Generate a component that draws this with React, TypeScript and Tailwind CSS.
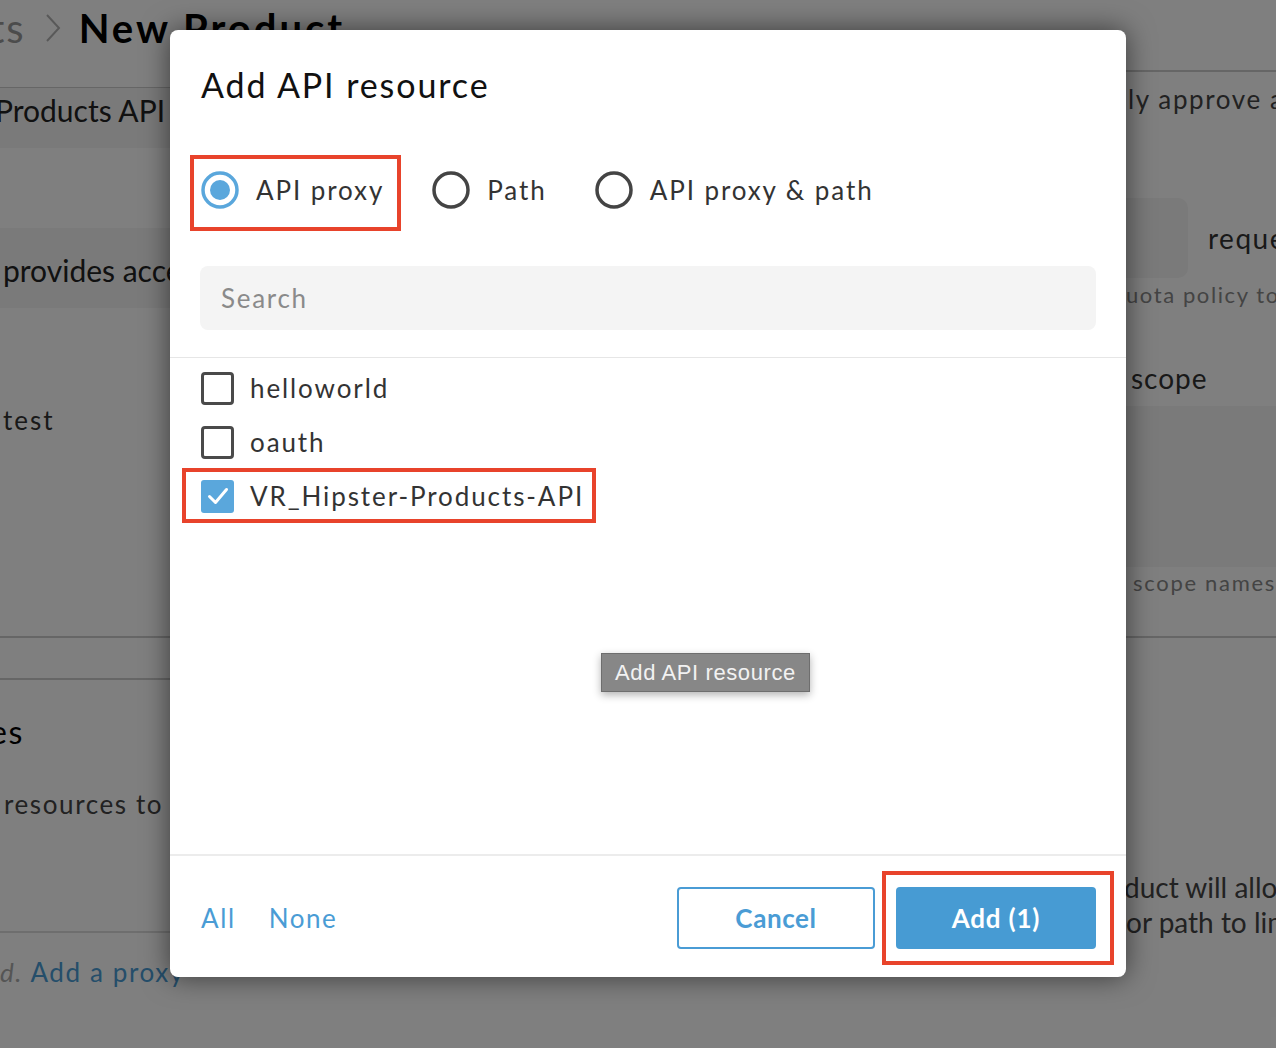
import React from "react";

function Radio({ checked }: { checked?: boolean }) {
  return (
    <svg width="38" height="38" viewBox="0 0 38 38" className="shrink-0">
      <circle cx="19" cy="19" r="17" fill="none" stroke={checked ? "#5aa7dc" : "#444444"} strokeWidth="3.5" />
      {checked && <circle cx="19" cy="19" r="10" fill="#5aa7dc" />}
    </svg>
  );
}

function Checkbox({ checked }: { checked?: boolean }) {
  if (checked) {
    return (
      <div className="w-[33px] h-[33px] shrink-0 rounded-[3px] bg-[#5aa7dc] flex items-center justify-center">
        <svg width="24" height="24" viewBox="0 0 24 24">
          <path d="M3.5 12.5 L9.5 18.5 L20.5 5.5" fill="none" stroke="#ffffff" strokeWidth="3" strokeLinecap="round" strokeLinejoin="round" />
        </svg>
      </div>
    );
  }
  return <div className="w-[33px] h-[33px] shrink-0 rounded-[4px] border-[3px] border-[#4a4a4a] bg-white" />;
}

export default function App() {
  return (
    <div className="relative w-[1276px] h-[1048px] overflow-hidden bg-white font-['Lato','Noto_Sans',sans-serif]">
      {/* Background page */}
      <div className="flex h-full">
        <div className="w-[620px] flex flex-col shrink-0">
          <div className="h-[87px] flex items-start">
            <div className="flex items-center h-[56px]">
              <span className="text-[40px] leading-[48px] text-[#999999] -ml-[10px] tracking-[2px]">ts</span>
              <svg width="16" height="30" viewBox="0 0 16 30" className="ml-[19px] mr-[18px]">
                <path d="M2 2 L14 15 L2 28" fill="none" stroke="#b3b3b3" strokeWidth="2" />
              </svg>
              <span className="text-[40px] leading-[48px] font-bold text-black tracking-[3px] whitespace-nowrap">New Product</span>
            </div>
          </div>
          <div className="border-t border-[#cccccc]" />
          <div className="h-[60px] bg-[#f4f4f4] pt-[2px]">
            <span className="block text-[30px] leading-[40px] text-[#222222] -ml-[5px] whitespace-nowrap">Products API</span>
          </div>
          <div className="h-[80px]" />
          <div className="h-[80px] bg-[#f4f4f4] flex items-center pt-[4px]">
            <span className="text-[30px] text-[#222222] ml-[3px] whitespace-nowrap">provides access to the products</span>
          </div>
          <div className="mt-[96px] text-[26px] leading-[32px] text-[#333333] ml-[3px] tracking-[2px]">test</div>
          <div className="mt-[200px] border-t-2 border-[#cccccc]" />
          <div className="h-[42px] border-b-2 border-[#cccccc]" />
          <div className="mt-[32px] text-[32px] leading-[40px] text-black -ml-[10px] tracking-[1.5px]">es</div>
          <div className="mt-[36px] text-[26px] leading-[32px] text-[#444444] ml-[4px] whitespace-nowrap tracking-[1.6px]">resources to include in this product</div>
          <div className="mt-[111px] border-t-2 border-[#dddddd]" />
          <div className="mt-[23px] text-[26px] leading-[32px] whitespace-nowrap tracking-[1.6px]">
            <span className="italic text-[#aaaaaa]">d.</span>{" "}
            <span className="text-[#4a9cd5]">Add a proxy</span>
          </div>
        </div>
        <div className="flex-1" />
        <div className="w-[230px] flex flex-col shrink-0">
          <div className="mt-[70px] border-t-2 border-[#cccccc]" />
          <div className="mt-[11px] pl-[82px] text-[26px] leading-[32px] text-[#444444] whitespace-nowrap tracking-[1.6px]">ly approve all</div>
          <div className="mt-[84px] h-[80px] flex items-center pb-[2px]">
            <div className="w-[142px] h-[80px] shrink-0 rounded-[10px] bg-[#f4f4f4]" />
            <span className="ml-[20px] text-[28px] text-[#333333] whitespace-nowrap tracking-[1.5px]">requests</span>
          </div>
          <div className="mt-[2px] pl-[66px] text-[22px] leading-[28px] text-[#888888] whitespace-nowrap tracking-[1.6px]">quota policy to</div>
          <div className="mt-[52px] pl-[85px] text-[28px] leading-[34px] text-[#333333] whitespace-nowrap tracking-[1px]">scope</div>
          <div className="mt-[11px] h-[161px] bg-[#f4f4f4]" />
          <div className="mt-[2px] pl-[87px] text-[22px] leading-[28px] text-[#888888] whitespace-nowrap tracking-[1.7px]">scope names</div>
          <div className="mt-[39px] border-t-2 border-[#cccccc]" />
          <div className="mt-[232px] pl-[78px] text-[28px] leading-[35px] text-[#444444] whitespace-nowrap">duct will allow</div>
          <div className="pl-[80px] text-[28px] leading-[35px] text-[#444444] whitespace-nowrap">or path to limit</div>
        </div>
      </div>

      {/* Overlay */}
      <div className="absolute inset-0 bg-black/50" />

      {/* Modal */}
      <div className="absolute left-[170px] top-[30px] w-[956px] h-[947px] bg-white rounded-[8px] shadow-[0_0_28px_rgba(0,0,0,0.55)] flex flex-col">
        <div className="px-[31px] pt-[34px] text-[34px] leading-[41px] text-[#111111] tracking-[1.9px]">Add API resource</div>
        <div className="mt-[66px] px-[31px] flex items-center gap-[48px] h-[38px] text-[26px] leading-[38px] text-[#333333] tracking-[1.9px]">
          <div className="relative flex items-center gap-[17px]">
            <Radio checked />
            <span>API proxy</span>
            <div className="absolute -left-[11px] -right-[17px] -top-[16px] -bottom-[22px] border-4 border-[#e8432b]" />
          </div>
          <div className="flex items-center gap-[17px]">
            <Radio />
            <span>Path</span>
          </div>
          <div className="flex items-center gap-[17px]">
            <Radio />
            <span>API proxy &amp; path</span>
          </div>
        </div>
        <div className="mt-[57px] mx-[30px] h-[64px] rounded-[8px] bg-[#f4f4f4] flex items-center px-[21px] text-[26px] text-[#8a8a8a] tracking-[1.7px]">
          Search
        </div>
        <div className="mt-[27px] border-t border-[#e6e6e6]" />
        <div className="flex-1 px-[31px] pt-[3px] text-[26px] leading-[33px] text-[#333333] tracking-[1.9px]">
          {[
            { name: "helloworld", checked: false },
            { name: "oauth", checked: false },
            { name: "VR_Hipster-Products-API", checked: true },
          ].map((r) => (
            <div key={r.name} className="h-[54px] flex items-center">
              <div className="relative flex items-center gap-[16px]">
                <Checkbox checked={r.checked} />
                <span>{r.name}</span>
                {r.checked && (
                  <div className="absolute -left-[19px] -right-[12px] -top-[12px] -bottom-[10px] border-4 border-[#e8432b]" />
                )}
              </div>
            </div>
          ))}
        </div>
        <div className="border-t-2 border-[#ececec] pt-[31px] pb-[28px] px-[30px] flex items-center">
          <div className="flex items-center gap-[33px] pl-[1px] text-[26px] text-[#4a9cd5] tracking-[1.6px]">
            <span>All</span>
            <span>None</span>
          </div>
          <div className="ml-auto flex items-center gap-[21px]">
            <button className="w-[198px] h-[62px] rounded-[4px] border-2 border-[#4a9cd5] bg-white text-[26px] font-bold text-[#4a9cd5] tracking-[0.6px]">
              Cancel
            </button>
            <div className="relative">
              <button className="w-[200px] h-[62px] rounded-[4px] bg-[#479bd3] text-[26px] font-bold text-white tracking-[0.8px]">
                Add (1)
              </button>
              <div className="absolute -left-[14px] -right-[18px] -top-[16px] -bottom-[16px] border-4 border-[#e8432b]" />
            </div>
          </div>
        </div>
      </div>

      {/* Tooltip */}
      <div className="absolute left-[601px] top-[653px] w-[209px] h-[39px] bg-[#878787] border border-[#6e6e6e] shadow-[0_3px_8px_rgba(0,0,0,0.3)] flex items-center justify-center font-['Liberation_Sans',sans-serif] text-[22px] tracking-[0.6px] text-[#f2f2f2]">
        Add API resource
      </div>
    </div>
  );
}
